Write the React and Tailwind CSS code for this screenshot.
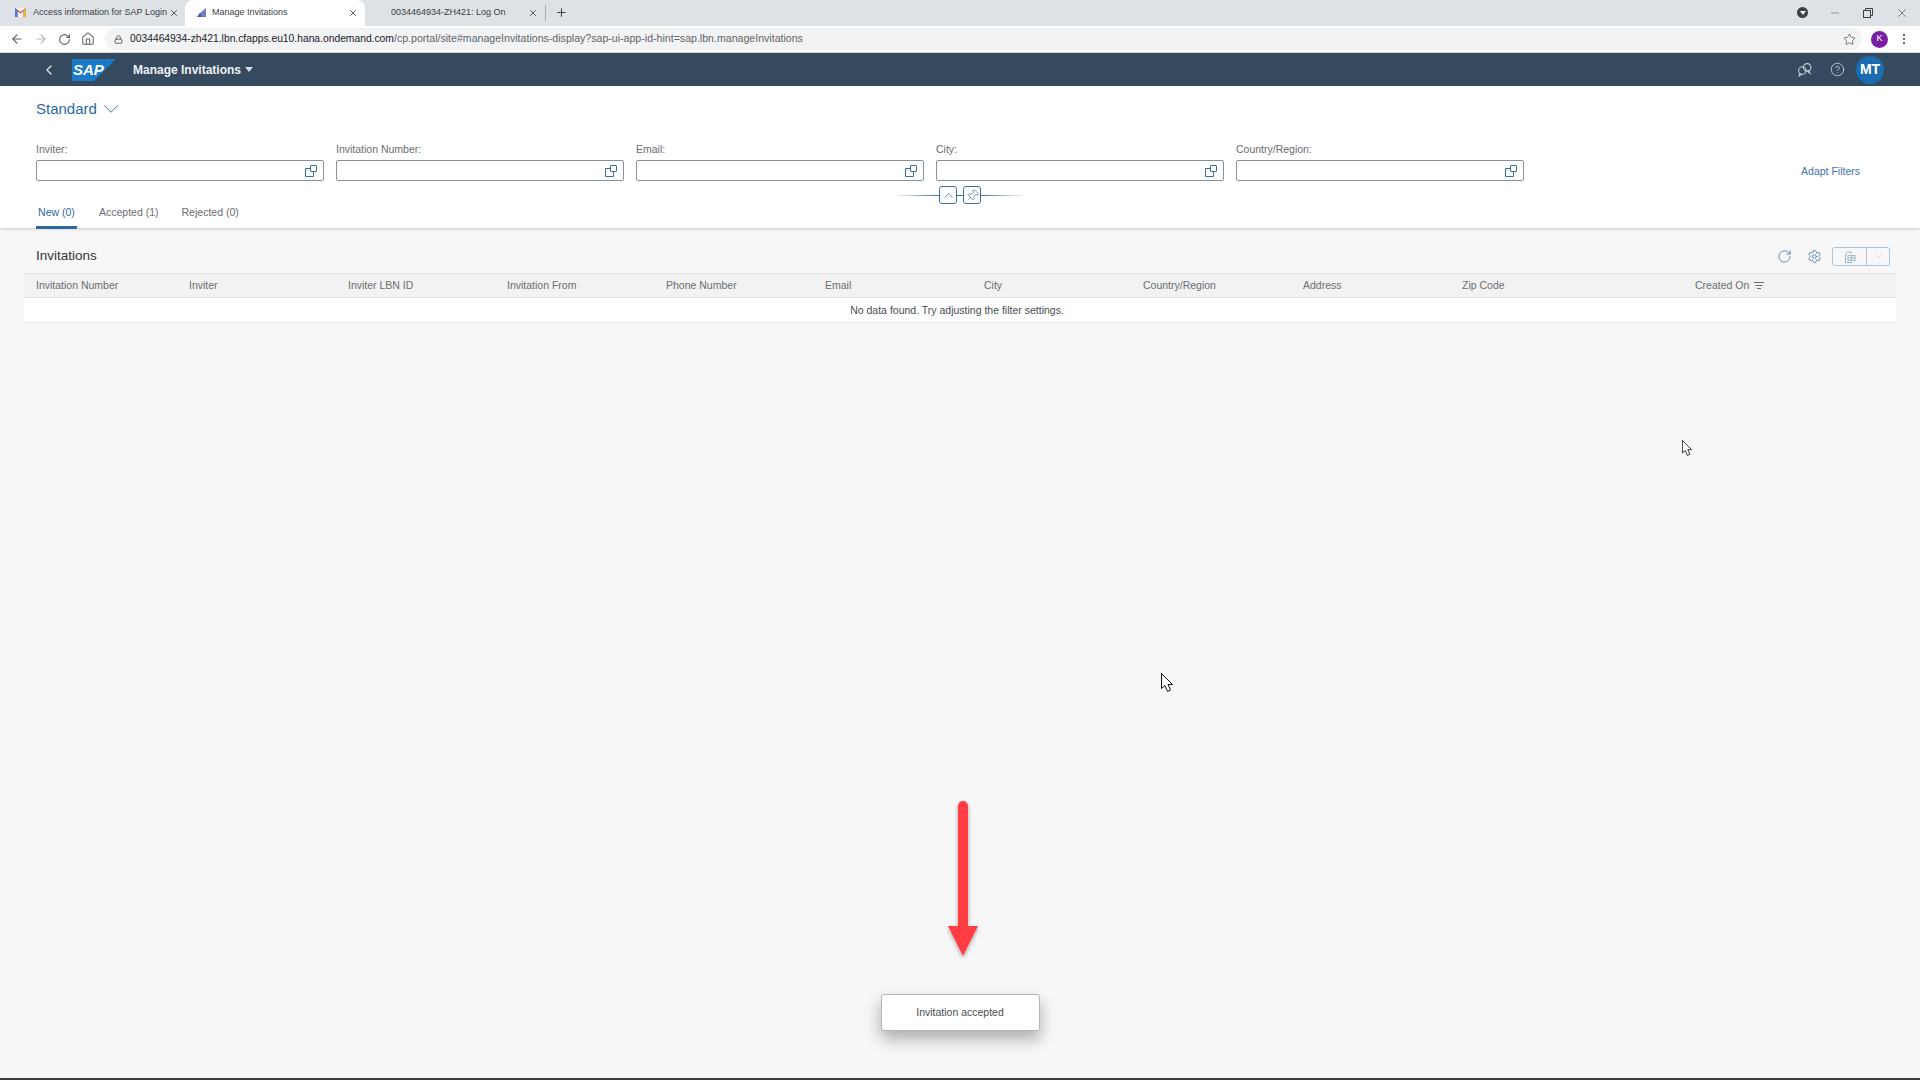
import React from "react";
import { ArrowLeft, ArrowRight, RotateCw, Home, Lock, Star, X, Plus, Minus, ChevronLeft, ChevronDown, ChevronUp, HelpCircle, Settings, Pin, MoreVertical } from "lucide-react";

function ValueHelp() {
  return (
    <svg width="14" height="14" viewBox="0 0 14 14" fill="none" stroke="#3b6f9e" strokeWidth="1" className="shrink-0">
      <rect x="6.5" y="1.5" width="6" height="6" rx="0.5" />
      <path d="M6.5 4.5H1.5V12.5H9.5V7.5" />
    </svg>
  );
}

function Field({ label }) {
  return (
    <div className="flex flex-col w-[288px]">
      <div className="h-[21px] text-[10.5px] leading-[21px] text-[#6a6d70]">{label}</div>
      <div className="h-[21px] border border-[#89919a] rounded-[2px] bg-white flex items-center justify-end pr-[5px]">
        <ValueHelp />
      </div>
    </div>
  );
}

function Cursor({ className, w, h }) {
  return (
    <svg width={w} height={h} viewBox="0 0 12 19" className={className}>
      <path d="M0.5 0.5V15.5L4 12.5L6.5 18.5L9.5 17L7 11.5H11.5Z" fill="#fff" stroke="#111" strokeWidth="1" />
    </svg>
  );
}

const cols = [
  ["Invitation Number", "w-[153px]"],
  ["Inviter", "w-[159px]"],
  ["Inviter LBN ID", "w-[159px]"],
  ["Invitation From", "w-[159px]"],
  ["Phone Number", "w-[159px]"],
  ["Email", "w-[159px]"],
  ["City", "w-[159px]"],
  ["Country/Region", "w-[160px]"],
  ["Address", "w-[159px]"],
  ["Zip Code", "w-[233px]"],
];

export default function App() {
  return (
    <div className="relative w-full h-screen overflow-hidden flex flex-col bg-[#f7f7f7] font-['Liberation_Sans',Arial,sans-serif]">
      {/* Browser tab strip */}
      <div className="h-[26px] shrink-0 bg-[#dee1e6] flex items-stretch text-[9px] text-[#3c4043]">
        <div className="w-[185px] flex items-center pl-[15px] pr-[5px] pb-[1px]">
          <svg width="11" height="9" viewBox="0 0 11 9" className="shrink-0">
            <rect width="11" height="9" fill="#f4f4f4" />
            <path d="M0 0V9H2.5V3L5.5 5.5L8.5 3V9H11V0L5.5 4Z" fill="#d8453a" />
            <path d="M8.5 3L11 0V9H8.5Z" fill="#e8b33b" />
            <path d="M0 0L2.5 3V9H0Z" fill="#3f7de0" />
          </svg>
          <span className="ml-[7px] w-[130px] whitespace-nowrap">Access information for SAP Login</span>
          <X size={10} strokeWidth={2} className="ml-[6px] text-[#3c4043]" />
        </div>
        <div className="w-[180px] bg-white rounded-t-[8px] flex items-center pl-[11px] pr-[7px] pb-[1px]">
          <svg width="11" height="11" viewBox="0 0 11 11" className="shrink-0">
            <path d="M1 10L4 6L10 1V10Z" fill="#6d7fc4" />
            <path d="M1 10L4 6L6 10Z" fill="#4b5fa8" />
          </svg>
          <span className="ml-[5px] flex-1 whitespace-nowrap">Manage Invitations</span>
          <X size={10} strokeWidth={2} className="text-[#3c4043]" />
        </div>
        <div className="w-[180px] flex items-center pl-[26px] pr-[7px] pb-[1px]">
          <span className="flex-1 whitespace-nowrap">0034464934-ZH421: Log On</span>
          <X size={10} strokeWidth={2} className="text-[#3c4043]" />
        </div>
        <div className="flex items-center pb-[1px]">
          <span className="w-px h-[16px] bg-[#a9acb0]" />
          <Plus size={13} strokeWidth={2} className="ml-[9px] text-[#3c4043]" />
        </div>
        <div className="flex-1" />
        <div className="flex items-center pr-[11px] gap-[21px] text-[#3c4043] pb-[1px]">
          <span className="w-[11px] h-[11px] rounded-full bg-[#3c4043] flex items-center justify-center">
            <span className="w-0 h-0 border-l-[3px] border-r-[3px] border-t-[4px] border-l-transparent border-r-transparent border-t-white" />
          </span>
          <Minus size={12} strokeWidth={1} />
          <svg width="12" height="12" viewBox="0 0 12 12" fill="none" stroke="#3c4043" strokeWidth="1">
            <rect x="1.5" y="3.5" width="7" height="7" />
            <path d="M3.5 3.5V1.5H10.5V8.5H8.5" />
          </svg>
          <X size={14} strokeWidth={1} />
        </div>
      </div>

      {/* Address bar */}
      <div className="h-[27px] shrink-0 bg-white flex items-center text-[#5f6368] border-b border-[#d5d7da]">
        <div className="w-[105px] flex items-center pl-[10px] gap-[10px]">
          <ArrowLeft size={14} strokeWidth={2} />
          <ArrowRight size={14} strokeWidth={2} className="text-[#b4b7bb]" />
          <RotateCw size={13} strokeWidth={2} />
          <Home size={14} strokeWidth={1.75} />
        </div>
        <div className="w-[1757px] h-[22px] bg-[#f1f3f4] rounded-full flex items-center pl-[9px] pr-[5px]">
          <Lock size={9} strokeWidth={2.5} className="text-[#5f6368]" />
          <span className="ml-[7px] flex-1 text-[10.6px] whitespace-nowrap">
            <span className="text-[10.3px] text-[#202124]">0034464934-zh421.lbn.cfapps.eu10.hana.ondemand.com</span>
            /cp.portal/site#manageInvitations-display?sap-ui-app-id-hint=sap.lbn.manageInvitations
          </span>
          <Star size={13} strokeWidth={1.5} className="mr-[1px] text-[#5f6368]" />
        </div>
        <div className="flex-1 flex items-center pl-[9px]">
          <span className="w-[17px] h-[17px] rounded-full bg-[#7b1fa2] flex items-center justify-center text-[9px] text-white">K</span>
          <MoreVertical size={14} strokeWidth={2} className="ml-[9px]" />
        </div>
      </div>

      {/* Shell bar */}
      <div className="h-[33px] shrink-0 bg-[#354a5f] flex items-center text-white">
        <ChevronLeft size={16} strokeWidth={2} className="ml-[41px] text-[#dfe5ea]" />
        <div className="ml-[15px] w-[44px] h-[22px] relative shrink-0">
          <svg width="44" height="22" viewBox="0 0 44 22" className="absolute inset-0">
            <polygon points="0,0 44,0 22,22 0,22" fill="#1a7ac6" />
          </svg>
          <span className="absolute left-[1px] top-[2px] text-[15px] leading-[18px] font-bold italic text-white">SAP</span>
        </div>
        <span className="ml-[17px] text-[12px] font-bold text-[#eef1f4] whitespace-nowrap">Manage Invitations</span>
        <span className="ml-[4px] w-0 h-0 border-l-[4px] border-r-[4px] border-t-[5px] border-l-transparent border-r-transparent border-t-[#d5dde5]" />
        <div className="flex-1" />
        <svg width="15" height="15" viewBox="0 0 14 14" fill="none" stroke="#c7d0d9" strokeWidth="1" className="mr-[18px]">
          <circle cx="5" cy="8" r="3.5" />
          <path d="M2.5 10.5L2 13L4.5 11.5" />
          <circle cx="9.5" cy="5" r="3.5" />
          <path d="M11 8L12 10.5L9.5 8.5" />
        </svg>
        <HelpCircle size={15} strokeWidth={1.25} className="text-[#d6dde4] mr-[11px]" />
        <div className="w-[28px] h-[28px] rounded-full bg-[#1a6bb0] flex items-center justify-center text-[14px] font-bold mr-[36px]">MT</div>
      </div>

      {/* Filter bar */}
      <div className="h-[142px] shrink-0 bg-white flex flex-col pl-[36px] pr-[60px] shadow-[0_1px_3px_rgba(0,0,0,0.2)] z-10">
        <div className="h-[53px] shrink-0 pt-[13px] flex items-start">
          <span className="text-[15px] leading-[20px] text-[#2b6a9f]">Standard</span>
          <ChevronDown size={26} strokeWidth={0.9} className="ml-[1px] -mt-[3px] text-[#2b6a9f]" />
        </div>
        <div className="flex items-start">
          <div className="flex gap-[12px]">
            <Field label="Inviter:" />
            <Field label="Invitation Number:" />
            <Field label="Email:" />
            <Field label="City:" />
            <Field label="Country/Region:" />
          </div>
          <div className="flex-1" />
          <span className="mt-[24px] text-[10.5px] leading-[16px] text-[#3f74a8] whitespace-nowrap">Adapt Filters</span>
        </div>
        <div className="h-[18px] shrink-0 mt-[5px] ml-[857px] w-[132px] flex items-center">
          <span className="w-[46px] h-px bg-gradient-to-r from-transparent to-[#3f6f96]" />
          <span className="w-[18px] h-[18px] border border-[#3f6f96] rounded-[3px] flex items-center justify-center bg-white">
            <ChevronUp size={15} strokeWidth={1.25} className="text-[#3f6f96]" />
          </span>
          <span className="w-[6px] h-px bg-[#3f6f96]" />
          <span className="w-[18px] h-[18px] border border-[#3f6f96] rounded-[3px] flex items-center justify-center bg-white">
            <Pin size={13} strokeWidth={1.25} className="text-[#3f6f96] rotate-45" />
          </span>
          <span className="w-[44px] h-px bg-gradient-to-r from-[#3f6f96] to-transparent" />
        </div>
        <div className="h-[24px] shrink-0 flex text-[10.5px] leading-[16px] text-[#6a6d70]">
          <div className="w-[41px] h-[25px] flex justify-center border-b-[3px] border-[#2b6a9f] text-[#2b6a9f]">New (0)</div>
          <span className="ml-[22px]">Accepted (1)</span>
          <span className="ml-[23px]">Rejected (0)</span>
        </div>
      </div>

      {/* Table area */}
      <div className="flex-1 flex flex-col px-[24px]">
        <div className="h-[45px] shrink-0 flex items-center pl-[12px] pr-[6px] pt-[12px]">
          <span className="text-[13.5px] text-[#32363a]">Invitations</span>
          <div className="flex-1" />
          <RotateCw size={15} strokeWidth={1.25} className="text-[#3b6f9e]" />
          <Settings size={15} strokeWidth={1.25} className="ml-[15px] text-[#3b6f9e]" />
          <div className="ml-[10px] w-[58px] h-[19px] flex border border-[#a9c4da] rounded-[3px]">
            <div className="w-[34px] flex items-center justify-center border-r border-[#a9c4da]">
              <svg width="12" height="12" viewBox="0 0 12 12" fill="none" stroke="#9fb6c9" strokeWidth="1">
                <path d="M1.5 11.5V3L3.5 1H7V3" />
                <rect x="4" y="4.5" width="7" height="5" />
                <path d="M4 7H11M7.5 4.5V9.5" />
                <path d="M1.5 11.5H8" />
              </svg>
            </div>
            <div className="flex-1 flex items-center justify-center">
              <ChevronDown size={11} strokeWidth={1} className="text-[#a9c4da]" />
            </div>
          </div>
        </div>
        <div className="h-[25px] shrink-0 bg-[#f2f2f2] border-t border-b border-[#e1e1e1] flex items-center pl-[12px] pt-[1px] text-[10.5px] text-[#6a6d70] whitespace-nowrap">
          {cols.map(([t, w]) => (
            <div key={t} className={w}>{t}</div>
          ))}
          <div className="flex items-center">
            Created On
            <svg width="10" height="8" viewBox="0 0 10 8" stroke="#6a6d70" strokeWidth="1" className="ml-[5px]">
              <path d="M0 0.5H10M1.5 3.5H8.5M3 6.5H7" />
            </svg>
          </div>
        </div>
        <div className="h-[25px] shrink-0 bg-white border-b border-[#e5e5e5] flex items-center justify-center text-[10.5px] text-[#4a4d50] pr-[6px] pt-[1px]">
          No data found. Try adjusting the filter settings.
        </div>
      </div>

      <div className="h-[2px] shrink-0 bg-[#3a3a3a]" />

      {/* Annotation arrow */}
      <svg width="50" height="170" viewBox="0 0 50 170" className="absolute left-[938px] top-[796px]">
        <defs>
          <filter id="as" x="-30%" y="-10%" width="160%" height="120%">
            <feDropShadow dx="0" dy="2" stdDeviation="2" floodColor="#000" floodOpacity="0.35" />
          </filter>
        </defs>
        <g filter="url(#as)">
          <path d="M20 10A5 5 0 0 1 30 10V130H40L25 160L10 130H20Z" fill="#ff3d43" />
        </g>
      </svg>

      {/* Toast */}
      <div className="absolute left-[881px] top-[994px] w-[159px] h-[37px] bg-white border border-[#b5b5b5] rounded-[3px] shadow-[0_8px_16px_rgba(0,0,0,0.3)] flex items-center justify-center text-[10.5px] text-[#4a4d50] pr-[1px]">
        Invitation accepted
      </div>

      {/* Cursors */}
      <Cursor className="absolute left-[1682px] top-[440px]" w={10} h={16} />
      <Cursor className="absolute left-[1161px] top-[673px]" w={12} h={19} />
    </div>
  );
}
